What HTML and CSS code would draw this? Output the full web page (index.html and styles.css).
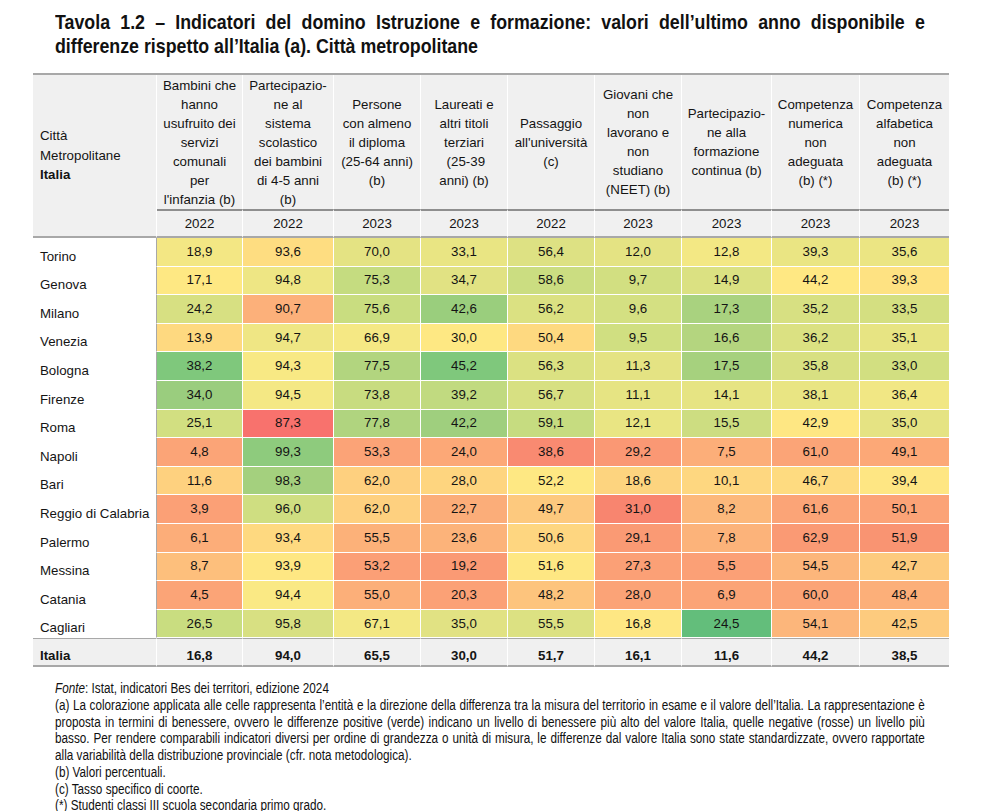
FILE: index.html
```html
<!DOCTYPE html>
<html lang="it">
<head>
<meta charset="utf-8">
<title>Tavola 1.2</title>
<link rel="stylesheet" href="styles.css">
</head>
<body>
<div class="title-wrap">
<h1 class="title">Tavola 1.2 – Indicatori del domino Istruzione e formazione: valori dell’ultimo anno disponibile e differenze rispetto all’Italia (a). Città metropolitane</h1>
</div>
<table class="data">
<colgroup>
<col class="c-name"><col class="w86"><col class="w91"><col class="w87"><col class="w87"><col class="w87"><col class="w87"><col class="w90"><col class="w88"><col class="w89">
</colgroup>
<thead>
<tr class="h1row">
<th class="namehead" rowspan="2">Città<br>Metropolitane<br><b>Italia</b></th>
<th>Bambini che<br>hanno<br>usufruito dei<br>servizi<br>comunali<br>per<br>l'infanzia (b)</th>
<th>Partecipazio-<br>ne al<br>sistema<br>scolastico<br>dei bambini<br>di 4-5 anni<br>(b)</th>
<th>Persone<br>con almeno<br>il diploma<br>(25-64 anni)<br>(b)</th>
<th>Laureati e<br>altri titoli<br>terziari<br>&nbsp;(25-39<br>anni) (b)</th>
<th>Passaggio<br>all'università<br>(c)</th>
<th>Giovani che<br>non<br>lavorano e<br>non<br>studiano<br>(NEET) (b)</th>
<th>Partecipazio-<br>ne alla<br>formazione<br>continua (b)</th>
<th>Competenza<br>numerica<br>non<br>adeguata<br>(b) (*)</th>
<th>Competenza<br>alfabetica<br>non<br>adeguata<br>(b) (*)</th>
</tr>
<tr class="h2row">
<th>2022</th><th>2022</th><th>2023</th><th>2023</th><th>2022</th><th>2023</th><th>2023</th><th>2023</th><th>2023</th>
</tr>
</thead>
<tbody>
<tr><td class="name">Torino</td><td style="background:#f3e784">18,9</td><td style="background:#fedd81">93,6</td><td style="background:#e4e383">70,0</td><td style="background:#e9e583">33,1</td><td style="background:#dde183">56,4</td><td style="background:#e4e383">12,0</td><td style="background:#f3e884">12,8</td><td style="background:#eae583">39,3</td><td style="background:#ebe583">35,6</td></tr>
<tr><td class="name">Genova</td><td style="background:#fee883">17,1</td><td style="background:#eee684">94,8</td><td style="background:#c5dc80">75,3</td><td style="background:#e1e283">34,7</td><td style="background:#cbdd81">58,6</td><td style="background:#d2df81">9,7</td><td style="background:#dbe182">14,9</td><td style="background:#ffe883">44,2</td><td style="background:#fee282">39,3</td></tr>
<tr><td class="name">Milano</td><td style="background:#d7e082">24,2</td><td style="background:#fcb07a">90,7</td><td style="background:#c9dd80">75,6</td><td style="background:#9ace7d">42,6</td><td style="background:#dbe182">56,2</td><td style="background:#d4e082">9,6</td><td style="background:#a9d27f">17,3</td><td style="background:#d7e082">35,2</td><td style="background:#d4df81">33,5</td></tr>
<tr><td class="name">Venezia</td><td style="background:#fed980">13,9</td><td style="background:#efe684">94,7</td><td style="background:#f5e884">66,9</td><td style="background:#fee883">30,0</td><td style="background:#fed980">50,4</td><td style="background:#d0df81">9,5</td><td style="background:#b4d57f">16,6</td><td style="background:#dbe182">36,2</td><td style="background:#e7e483">35,1</td></tr>
<tr><td class="name">Bologna</td><td style="background:#7fc87c">38,2</td><td style="background:#f8e984">94,3</td><td style="background:#b2d57f">77,5</td><td style="background:#7fc87c">45,2</td><td style="background:#dbe182">56,3</td><td style="background:#e4e383">11,3</td><td style="background:#a6d17e">17,5</td><td style="background:#d8e082">35,8</td><td style="background:#d2df81">33,0</td></tr>
<tr><td class="name">Firenze</td><td style="background:#9acd7e">34,0</td><td style="background:#f4e884">94,5</td><td style="background:#c8dc80">73,8</td><td style="background:#c1da80">39,2</td><td style="background:#d7e082">56,7</td><td style="background:#e6e483">11,1</td><td style="background:#e6e483">14,1</td><td style="background:#e9e583">38,1</td><td style="background:#f1e784">36,4</td></tr>
<tr><td class="name">Roma</td><td style="background:#d2df81">25,1</td><td style="background:#f8726d">87,3</td><td style="background:#b0d47f">77,8</td><td style="background:#9fcf7e">42,2</td><td style="background:#c6dc80">59,1</td><td style="background:#e9e583">12,1</td><td style="background:#cddd81">15,5</td><td style="background:#fee783">42,9</td><td style="background:#e5e383">35,0</td></tr>
<tr><td class="name">Napoli</td><td style="background:#fba477">4,8</td><td style="background:#8ecb7d">99,3</td><td style="background:#fba377">53,3</td><td style="background:#fca877">24,0</td><td style="background:#f98a71">38,6</td><td style="background:#fa9874">29,2</td><td style="background:#fcae79">7,5</td><td style="background:#fba477">61,0</td><td style="background:#fca877">49,1</td></tr>
<tr><td class="name">Bari</td><td style="background:#fed17f">11,6</td><td style="background:#a4d07e">98,3</td><td style="background:#fed07f">62,0</td><td style="background:#fed57f">28,0</td><td style="background:#fee883">52,2</td><td style="background:#fdd47f">18,6</td><td style="background:#fed780">10,1</td><td style="background:#fedb80">46,7</td><td style="background:#fee683">39,4</td></tr>
<tr><td class="name">Reggio di Calabria</td><td style="background:#fba076">3,9</td><td style="background:#cfde81">96,0</td><td style="background:#fed07f">62,0</td><td style="background:#fbad79">22,7</td><td style="background:#fdc97e">49,7</td><td style="background:#f8856f">31,0</td><td style="background:#fcb87b">8,2</td><td style="background:#fba477">61,6</td><td style="background:#fba377">50,1</td></tr>
<tr><td class="name">Palermo</td><td style="background:#fcad79">6,1</td><td style="background:#fed980">93,4</td><td style="background:#fcb179">55,5</td><td style="background:#fcb37a">23,6</td><td style="background:#fed680">50,6</td><td style="background:#fa9a74">29,1</td><td style="background:#fcb37a">7,8</td><td style="background:#fa9a74">62,9</td><td style="background:#f99472">51,9</td></tr>
<tr><td class="name">Messina</td><td style="background:#fdbf7c">8,7</td><td style="background:#fee783">93,9</td><td style="background:#fb9f76">53,2</td><td style="background:#fa9a74">19,2</td><td style="background:#fee783">51,6</td><td style="background:#fba076">27,3</td><td style="background:#fba076">5,5</td><td style="background:#fcb67b">54,5</td><td style="background:#fdcb7e">42,7</td></tr>
<tr><td class="name">Catania</td><td style="background:#fba477">4,5</td><td style="background:#fae984">94,4</td><td style="background:#fcaf79">55,0</td><td style="background:#fba176">20,3</td><td style="background:#fdc47d">48,2</td><td style="background:#fba377">28,0</td><td style="background:#fba477">6,9</td><td style="background:#fba477">60,0</td><td style="background:#fcaf79">48,4</td></tr>
<tr><td class="name">Cagliari</td><td style="background:#c9dd80">26,5</td><td style="background:#d8e082">95,8</td><td style="background:#f3e884">67,1</td><td style="background:#e1e283">35,0</td><td style="background:#dce182">55,5</td><td style="background:#fee783">16,8</td><td style="background:#63be7b">24,5</td><td style="background:#fcb67b">54,1</td><td style="background:#fdcb7e">42,5</td></tr>
</tbody>
<tfoot>
<tr class="total"><td class="name">Italia</td><td>16,8</td><td>94,0</td><td>65,5</td><td>30,0</td><td>51,7</td><td>16,1</td><td>11,6</td><td>44,2</td><td>38,5</td></tr>
</tfoot>
</table>
<div class="notes-wrap">
<div class="notes">
<p><i>Fonte</i>: Istat, indicatori Bes dei territori, edizione 2024</p>
<p class="just">(a) La colorazione applicata alle celle rappresenta l’entità e la direzione della differenza tra la misura del territorio in esame e il valore dell’Italia. La rappresentazione è proposta in termini di benessere, ovvero le differenze positive (verde) indicano un livello di benessere più alto del valore Italia, quelle negative (rosse) un livello più basso. Per rendere comparabili indicatori diversi per ordine di grandezza o unità di misura, le differenze dal valore Italia sono state standardizzate, ovvero rapportate alla variabilità della distribuzione provinciale (cfr. nota metodologica).</p>
<p>(b) Valori percentuali.</p>
<p>(c) Tasso specifico di coorte.</p>
<p>(*) Studenti classi III scuola secondaria primo grado.</p>
</div>
</div>
</body>
</html>
```
FILE: styles.css
```css
html, body {
  margin: 0;
  padding: 0;
  background: #ffffff;
  overflow: hidden;
}
body {
  font-family: "Liberation Sans", Arial, sans-serif;
  color: #141414;
}
/* Arial Narrow is not available: Liberation Sans (Arial metrics) is compressed horizontally to its width */
.title-wrap {
  margin: 10px 0 15px 55px;
  width: 870px;
  height: 48px;
}
.title {
  margin: 0;
  width: 1027px;
  transform: scaleX(0.847);
  transform-origin: 0 0;
  font-family: "Liberation Sans", Arial, sans-serif;
  font-weight: bold;
  font-size: 21px;
  line-height: 24px;
  text-align: justify;
  color: #111;
}
.data {
  margin-left: 33px;
  width: 916px;
  table-layout: fixed;
  border-collapse: separate;
  border-spacing: 0;
  border-top: 2px solid #a8a8a8;
  font-size: 13.3px;
}
.c-name { width: 124px; }
.w86 { width: 86px; }
.w87 { width: 87px; }
.w88 { width: 88px; }
.w89 { width: 89px; }
.w90 { width: 90px; }
.w91 { width: 91px; }
.data th {
  background: #f0f0f0;
  font-weight: normal;
  padding: 0;
  line-height: 19px;
  vertical-align: middle;
  text-align: center;
  border-right: 1px solid #ffffff;
}
.data th:last-child { border-right: none; }
.h1row { height: 134px; }
.h2row { height: 29px; }
.data .namehead {
  text-align: left;
  padding-left: 7px;
  line-height: 19.5px;
  border-right: 1px solid #ffffff;
  border-bottom: 2px solid #a8a8a8;
}
.h2row th {
  border-top: 2px solid #8e8e8e;
  border-bottom: 2px solid #a8a8a8;
  line-height: 24px;
}
.data tbody tr { height: 28.6px; }
.data td {
  padding: 0;
  text-align: center;
  vertical-align: middle;
  border-right: 1px solid #ffffff;
  border-bottom: 1px solid #ffffff;
  line-height: 16px;
}
.data td:last-child { border-right: none; }
.data td.name {
  text-align: left;
  padding-left: 7px;
  vertical-align: bottom;
  padding-bottom: 1px;
  background: #ffffff;
  border-right: 1px solid #a8a8a8;
}
.total { height: 29px; }
.total td {
  background: #f0f0f0;
  font-weight: bold;
  vertical-align: bottom;
  padding-bottom: 1px;
  border-top: 1px solid #a8a8a8;
  border-bottom: 2px solid #a8a8a8;
}
.data .total td.name {
  background: #f0f0f0;
  border-right: 1px solid #ffffff;
}
.notes-wrap {
  margin: 13px 0 0 55px;
  width: 870px;
}
.notes {
  width: 1038px;
  transform: scaleX(0.838);
  transform-origin: 0 0;
  font-family: "Liberation Sans", Arial, sans-serif;
  font-size: 14px;
  line-height: 16.7px;
  color: #111;
}
.notes p { margin: 0; }
.notes .just { text-align: justify; }
```
